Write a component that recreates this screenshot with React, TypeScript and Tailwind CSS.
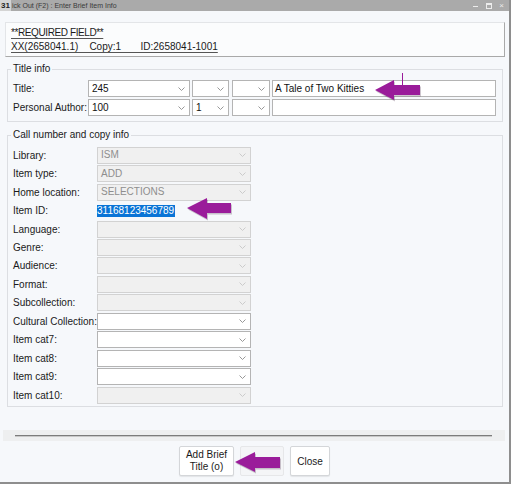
import React from "react";

const Chevron = ({ disabled }: { disabled?: boolean }) => (
  <svg width="7" height="4" viewBox="0 0 7 4" className="shrink-0">
    <polyline
      points="0.5,0.5 3.5,3.5 6.5,0.5"
      fill="none"
      strokeWidth="0.9"
      className={disabled ? "stroke-[#c6c6c6]" : "stroke-[#8c8c8c]"}
    />
  </svg>
);

const Select = ({
  value = "",
  disabled,
  className = "",
}: {
  value?: string;
  disabled?: boolean;
  className?: string;
}) => (
  <div
    className={`h-[17px] flex items-center justify-between pl-[3px] pr-[4px] border ${
      disabled
        ? "bg-[#f0f0f0] border-[#d2d2d2] text-[#8e8e8e]"
        : "bg-white border-[#b4b4b4] text-[#111]"
    } ${className}`}
  >
    <span className="leading-[12px]">{value}</span>
    <Chevron disabled={disabled} />
  </div>
);

const Row = ({ label, children }: { label: string; children: React.ReactNode }) => (
  <div className="h-[18.46px] flex items-center">
    <div className="w-[84px] shrink-0 text-[#1a1a1a]">{label}</div>
    {children}
  </div>
);

export default function App() {
  return (
    <div className="relative w-[512px] h-[486px] bg-white overflow-hidden font-['Liberation_Sans',Arial,sans-serif] text-[10px]">
      <div className="w-[511px] h-[484px] flex flex-col bg-[#f6f8fb] border-r-2 border-b-2 border-[#8e8e8e]">
        {/* Title bar */}
        <div className="h-[11px] shrink-0 flex items-center bg-[#aaaaaa]">
          <div className="h-full w-[11px] bg-[#d4d4d4] flex items-center pl-[1px] text-[8px] font-bold leading-none text-[#222]">
            31
          </div>
          <div className="pl-[1px] text-[7px] leading-none text-[#3a3a3a] whitespace-pre">
            ick Out (F2) : Enter Brief Item Info
          </div>
          <div className="ml-auto flex items-center pr-[1px]">
            <div className="w-[13px] h-[11px] flex items-center justify-center">
              <div className="w-[5px] h-[1.2px] bg-[#ececec] mt-[2px]" />
            </div>
            <div className="w-[13px] h-[11px] flex items-center justify-center">
              <div className="w-[6px] h-[6px] border border-t-2 border-[#ececec]" />
            </div>
            <div className="w-[13px] h-[11px] flex items-center justify-center text-[8px] leading-none text-[#ececec]">
              ×
            </div>
          </div>
        </div>

        {/* Top info panel */}
        <div className="ml-[5px] mt-[11px] w-[500px] h-[35px] bg-[#fbfcfd] border border-[#e3e5e8] border-r-[#a9a9a9] border-b-[#a9a9a9] pl-[5px] pt-[4px] text-[#1a1a1a]">
          <div className="leading-[12px] underline underline-offset-[2px] decoration-[#555] tracking-[-0.4px]">
            **REQUIRED FIELD**
          </div>
          <div className="mt-[2px] leading-[12px] underline underline-offset-[2px] decoration-[#555] whitespace-pre">
            {"XX(2658041.1)    Copy:1       ID:2658041-1001"}
          </div>
        </div>

        {/* Title info */}
        <fieldset className="ml-[7px] mt-[6px] w-[496px] border border-[#dcdee2] pl-[5px] pr-[6px] pb-[5px] pt-[5px]">
          <legend className="ml-[-2px] px-[2px] leading-[12px] text-[#1a1a1a]">Title info</legend>
          <div className="flex flex-col gap-[2px]">
            <div className="flex items-center">
              <div className="w-[75px] shrink-0 text-[#1a1a1a]">Title:</div>
              <Select value="245" className="w-[102px]" />
              <Select className="w-[37px] ml-[2px]" />
              <Select className="w-[38px] ml-[3px]" />
              <div className="ml-[2px] w-[224px] h-[17px] bg-white border border-[#b4b4b4] pl-[2px] flex items-center text-[#111]">
                A Tale of Two Kitties
              </div>
            </div>
            <div className="flex items-center">
              <div className="w-[75px] shrink-0 text-[#1a1a1a]">Personal Author:</div>
              <Select value="100" className="w-[102px]" />
              <Select value="1" className="w-[37px] ml-[2px]" />
              <Select className="w-[38px] ml-[3px]" />
              <div className="ml-[2px] w-[224px] h-[17px] bg-white border border-[#b4b4b4]" />
            </div>
          </div>
        </fieldset>

        {/* Call number and copy info */}
        <fieldset className="ml-[7px] mt-[7px] w-[496px] border border-[#dcdee2] pl-[5px] pt-[5px] pb-[2px]">
          <legend className="ml-[-2px] px-[2px] leading-[12px] text-[#1a1a1a]">Call number and copy info</legend>
          <Row label="Library:">
            <Select value="ISM" disabled className="w-[154px]" />
          </Row>
          <Row label="Item type:">
            <Select value="ADD" disabled className="w-[154px]" />
          </Row>
          <Row label="Home location:">
            <Select value="SELECTIONS" disabled className="w-[154px]" />
          </Row>
          <Row label="Item ID:">
            <span className="bg-[#0a74d6] text-white leading-[12px] pr-[1px]">31168123456789</span>
          </Row>
          <Row label="Language:">
            <Select disabled className="w-[154px]" />
          </Row>
          <Row label="Genre:">
            <Select disabled className="w-[154px]" />
          </Row>
          <Row label="Audience:">
            <Select disabled className="w-[154px]" />
          </Row>
          <Row label="Format:">
            <Select disabled className="w-[154px]" />
          </Row>
          <Row label="Subcollection:">
            <Select disabled className="w-[154px]" />
          </Row>
          <Row label="Cultural Collection:">
            <Select className="w-[154px]" />
          </Row>
          <Row label="Item cat7:">
            <Select className="w-[154px]" />
          </Row>
          <Row label="Item cat8:">
            <Select className="w-[154px]" />
          </Row>
          <Row label="Item cat9:">
            <Select className="w-[154px]" />
          </Row>
          <Row label="Item cat10:">
            <Select disabled className="w-[154px]" />
          </Row>
        </fieldset>

        {/* Separator strip */}
        <div className="ml-[3px] mt-[23px] w-[502px] h-[11px] bg-[#eeeff0] pt-[5px]">
          <div className="ml-[12px] w-[477px] h-[1px] bg-[#7c7c7c]" />
          <div className="ml-[12px] w-[477px] h-[1px] bg-[#c8c8c8]" />
        </div>

        {/* Buttons */}
        <div className="mt-[5px] flex pl-[179px] gap-[6px]">
          <div className="w-[55px] h-[30px] bg-white border border-[#d4d6d9] rounded-[2px] shadow-[0_1px_1px_rgba(0,0,0,0.08)] flex flex-col items-center justify-center leading-[12px] text-[#1a1a1a]">
            <span>Add Brief</span>
            <span>Title (o)</span>
          </div>
          <div className="w-[44px] h-[30px] bg-[#f4f5f7] border border-[#e6e7e9] rounded-[2px]" />
          <div className="w-[40px] h-[30px] bg-white border border-[#d4d6d9] rounded-[2px] shadow-[0_1px_1px_rgba(0,0,0,0.08)] flex items-center justify-center text-[#1a1a1a]">
            Close
          </div>
        </div>
      </div>

      {/* Annotation arrows overlay */}
      <svg
        className="absolute left-0 top-0 pointer-events-none"
        width="512"
        height="486"
        viewBox="0 0 512 486"
      >
        <line x1="402.5" y1="73" x2="402.5" y2="86" stroke="#9a1c9a" strokeWidth="1" />
        <g fill="#3a1a3a" opacity="0.25">
          <polygon points="376,91.5 395,81.5 395,86.5 421,86.5 421,96.5 395,96.5 395,101.5" />
          <polygon points="188,209.5 208,199.5 208,204.5 232,204.5 232,214.5 208,214.5 208,220.5" />
          <polygon points="236,463.5 256,453.5 256,458.5 281,458.5 281,469.5 256,469.5 256,473.5" />
        </g>
        <g fill="#9a1c9a">
          <polygon points="375,90 394,80 394,85 420,85 420,95 394,95 394,100" />
          <polygon points="187,208 207,198 207,203 231,203 231,213 207,213 207,219" />
          <polygon points="235,462 255,452 255,457 280,457 280,468 255,468 255,472" />
        </g>
      </svg>
    </div>
  );
}
